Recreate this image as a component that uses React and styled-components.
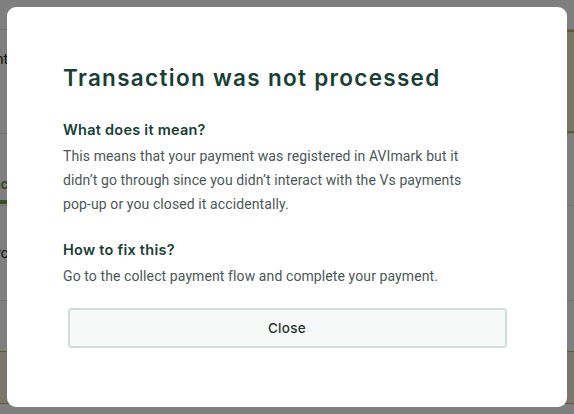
import React from 'react';
import styled, { createGlobalStyle } from 'styled-components';

const GlobalStyle = createGlobalStyle`
  html, body {
    margin: 0;
    padding: 0;
    background: #ffffff;
    overflow: hidden;
  }
  body {
    font-family: Roboto, "Liberation Sans", sans-serif;
  }
`;

const Page = styled.div`
  width: 574px;
  height: 414px;
  display: flex;
  flex-direction: column;
  background: #ffffff;
`;

const Row = styled.div`
  display: grid;
  grid-template-columns: 8px 1fr 8px;
  height: ${(p) => p.$h}px;
  border-top: ${(p) => (p.$top ? `1px solid ${p.$top}` : 'none')};
  border-bottom: ${(p) => (p.$bottom ? `1px solid ${p.$bottom}` : 'none')};
  background: ${(p) => p.$bg || '#ffffff'};
  box-sizing: border-box;
`;

const Edge = styled.div`
  display: flex;
  justify-content: flex-end;
  align-items: ${(p) => p.$align || 'center'};
  overflow: hidden;
  white-space: nowrap;
  font-size: 14px;
  color: ${(p) => p.$color || '#222222'};
  font-weight: ${(p) => p.$weight || 400};
  background: ${(p) => p.$bg || 'transparent'};
  border-top: ${(p) => (p.$top ? `2px solid ${p.$top}` : 'none')};
  border-bottom: ${(p) => (p.$bottom ? `2px solid ${p.$bottom}` : 'none')};
  box-sizing: border-box;
`;

const Tab = styled.div`
  display: flex;
  flex-direction: column;
  align-items: flex-end;
  gap: 8px;
  padding-top: 42px;
`;

const TabBar = styled.div`
  width: 40px;
  height: 4px;
  background: #6aa42e;
`;

const Overlay = styled.div`
  position: fixed;
  inset: 0;
  background: rgba(0, 0, 0, 0.5);
  display: flex;
  align-items: flex-start;
  justify-content: center;
  padding-top: 7px;
`;

const Modal = styled.div`
  width: 560px;
  height: 400px;
  box-sizing: border-box;
  background: #ffffff;
  border-radius: 9px;
  padding: 56px 56px 0;
  display: flex;
  flex-direction: column;
`;

const Title = styled.h1`
  margin: 0;
  font-family: Inter, "Noto Sans", sans-serif;
  font-size: 22.5px;
  line-height: 30px;
  font-weight: 600;
  color: #173f35;
  letter-spacing: 1.3px;
`;

const Heading = styled.h2`
  margin: ${(p) => p.$mt}px 0 3px;
  font-family: Inter, "Noto Sans", sans-serif;
  font-size: 14.5px;
  line-height: 22px;
  font-weight: 600;
  color: #173f35;
  letter-spacing: 0.25px;
`;

const Text = styled.p`
  margin: 0;
  max-width: 405px;
  font-family: Roboto, "Liberation Sans", sans-serif;
  font-size: 14px;
  line-height: 24px;
  letter-spacing: 0.1px;
  color: #4a5855;
`;

const Button = styled.button`
  align-self: center;
  margin-top: 20px;
  width: 439px;
  height: 40px;
  border: 2px solid #cfdcd8;
  border-radius: 4px;
  background: #f5faf8;
  font-family: Inter, "Noto Sans", sans-serif;
  font-size: 13.5px;
  font-weight: 500;
  letter-spacing: 0.3px;
  color: #1f3431;
  cursor: pointer;
`;

const App = () => (
  <>
    <GlobalStyle />
    <Page>
      <Row $h={30} $bottom="#dcdcdc">
        <Edge />
        <div />
        <Edge />
      </Row>
      <Row $h={104} $bottom="#dcdcdc">
        <Edge $align="flex-start" style={{ paddingTop: 21 }}>Payment</Edge>
        <div />
        <Edge $bg="#f7e8c0" $top="#cfb44a" $bottom="#cfb44a" />
      </Row>
      <Row $h={71}>
        <Edge $align="flex-start" $color="#5c9a24" $weight={600}>
          <Tab>
            <span>Transac</span>
            <TabBar />
          </Tab>
        </Edge>
        <div />
        <Edge />
      </Row>
      <Row $h={96} $top="#e6e6e6" $bottom="#e6e6e6">
        <Edge>Pc</Edge>
        <div />
        <Edge />
      </Row>
      <Row $h={50}>
        <Edge />
        <div />
        <Edge />
      </Row>
      <Row $h={53} $bg="#f7ecd2" $top="#cfb44a" $bottom="#cfb44a">
        <Edge />
        <div />
        <Edge />
      </Row>
    </Page>
    <Overlay>
      <Modal>
        <Title>Transaction was not processed</Title>
        <Heading $mt={26}>What does it mean?</Heading>
        <Text>
          This means that your payment was registered in AVImark but it
          didn’t go through since you didn’t interact with the Vs payments
          pop-up or you closed it accidentally.
        </Text>
        <Heading $mt={23}>How to fix this?</Heading>
        <Text>Go to the collect payment flow and complete your payment.</Text>
        <Button type="button">Close</Button>
      </Modal>
    </Overlay>
  </>
);

export default App;
